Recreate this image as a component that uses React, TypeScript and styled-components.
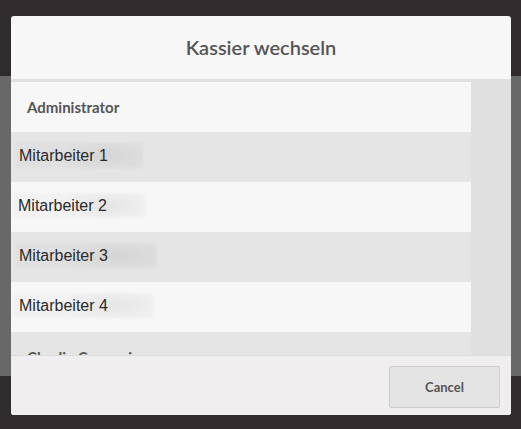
import React from "react";
import styled, { createGlobalStyle } from "styled-components";

const Global = createGlobalStyle`
  html, body { margin: 0; padding: 0; }
  body { width: 521px; height: 429px; overflow: hidden; font-family: Lato, "Liberation Sans", sans-serif; }
`;

const Page = styled.div`
  position: relative;
  width: 521px;
  height: 429px;
  display: flex;
  flex-direction: column;
`;

const DarkBar = styled.div<{ $h: number }>`
  height: ${(p) => p.$h}px;
  background: #302b2c;
`;

const Shade = styled.div`
  flex: 1;
  background: #686868;
`;

const Dialog = styled.div`
  position: absolute;
  left: 11px;
  top: 16px;
  width: 500px;
  height: 399px;
  border-radius: 3px;
  overflow: hidden;
  background: #f7f7f7;
  display: flex;
  flex-direction: column;
`;

const Header = styled.div`
  flex: none;
  height: 66px;
  box-sizing: border-box;
  padding-bottom: 1px;
  display: flex;
  align-items: center;
  justify-content: center;
  border-bottom: 3px solid #e0e0e0;
  font-family: Lato, sans-serif;
  font-weight: 600;
  font-size: 20px;
  color: #555;
`;

const Body = styled.div`
  flex: 1;
  display: flex;
  overflow: hidden;
  background: #e0e0e0;
`;

const List = styled.div`
  width: 460px;
  display: flex;
  flex-direction: column;
`;

const Row = styled.div<{ $alt?: boolean }>`
  height: 50px;
  flex: none;
  display: flex;
  align-items: center;
  background: ${(p) => (p.$alt ? "#e5e5e5" : "#f7f7f7")};
`;

const GroupLabel = styled.span`
  margin-left: 16px;
  font-family: Lato, sans-serif;
  font-weight: 700;
  font-size: 15px;
  color: #555;
`;

const Name = styled.span<{ $x: number; $w: number; $pad: number }>`
  position: relative;
  margin-left: ${(p) => p.$x}px;
  width: ${(p) => p.$w}px;
  height: 25px;
  display: flex;
  align-items: center;
  padding-left: ${(p) => p.$pad}px;
  box-sizing: border-box;
  margin-top: -3px;
  font-family: "Liberation Sans", Arial, sans-serif;
  font-size: 16px;
  color: #2a2a2a;
  &::before {
    content: "";
    position: absolute;
    inset: 0;
    background: radial-gradient(ellipse 40% 70% at 72% 50%, rgba(0,0,0,0.07), rgba(0,0,0,0.02) 100%);
    filter: blur(1.5px);
  }
  & > span { position: relative; }
`;

const Gutter = styled.div`
  flex: 1;
  background: #e0e0e0;
`;

const Footer = styled.div`
  flex: none;
  height: 60px;
  border-top: 1px solid #dcdcdc;
  background: #f0eeee;
  display: flex;
  justify-content: flex-end;
  align-items: flex-start;
  padding: 10px 11px 0 0;
  box-sizing: border-box;
`;

const CancelButton = styled.button`
  width: 111px;
  height: 42px;
  background: #e5e4e4;
  border: 1px solid #cfcccc;
  border-radius: 2px;
  font-family: Lato, sans-serif;
  font-weight: 700;
  font-size: 13px;
  color: #555;
  padding: 0;
`;

const people = [
  { name: "Mitarbeiter 1", x: 5, w: 127, pad: 3 },
  { name: "Mitarbeiter 2", x: 2, w: 132, pad: 5 },
  { name: "Mitarbeiter 3", x: 4, w: 142, pad: 4 },
  { name: "Mitarbeiter 4", x: 2, w: 140, pad: 6 },
];

export default function App() {
  return (
    <>
      <Global />
      <Page>
        <DarkBar $h={76} />
        <Shade />
        <DarkBar $h={53} />
        <Dialog>
          <Header>Kassier wechseln</Header>
          <Body>
            <List>
              <Row>
                <GroupLabel>Administrator</GroupLabel>
              </Row>
              {people.map((p, i) => (
                <Row key={p.name} $alt={i % 2 === 0}>
                  <Name $x={p.x} $w={p.w} $pad={p.pad}>
                    <span>{p.name}</span>
                  </Name>
                </Row>
              ))}
              <Row $alt>
                <GroupLabel>Charlie Cgrossri</GroupLabel>
              </Row>
            </List>
            <Gutter />
          </Body>
          <Footer>
            <CancelButton>Cancel</CancelButton>
          </Footer>
        </Dialog>
      </Page>
    </>
  );
}
